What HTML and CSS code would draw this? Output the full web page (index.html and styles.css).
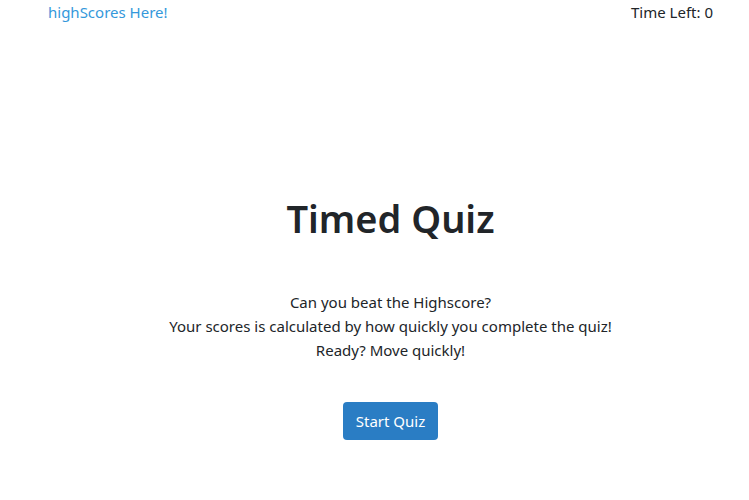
FILE: index.html
```html
<!DOCTYPE html>
<html>
<head>
<meta charset="utf-8">
<link rel="stylesheet" href="styles.css">
</head>
<body>
<header class="topbar">
  <a class="hs-link" href="#">highScores Here!</a>
  <span class="timer">Time Left: 0</span>
</header>
<main class="intro">
  <h1 class="title">Timed Quiz</h1>
  <p class="lead">Can you beat the Highscore?<br>Your scores is calculated by how quickly you complete the quiz!<br>Ready? Move quickly!</p>
  <button class="start-btn">Start Quiz</button>
</main>
</body>
</html>
```
FILE: styles.css
```css
html, body {
  margin: 0;
  padding: 0;
  background: #fff;
}
body {
  font-family: "Noto Sans", "Open Sans", sans-serif;
  font-size: 15px;
  color: #212529;
  line-height: 24px;
}
.topbar {
  display: flex;
  justify-content: space-between;
  padding: 0 36px 0 48px;
  height: 24px;
}
.hs-link {
  color: #3498db;
  text-decoration: none;
}
.timer {
  color: #212529;
}
.intro {
  display: flex;
  flex-direction: column;
  align-items: center;
  padding-left: 32px;
  padding-top: 168px;
}
.title {
  margin: 0;
  font-size: 38px;
  font-weight: 600;
  line-height: 52px;
}
.lead {
  margin: 46px 0 0;
  text-align: center;
}
.start-btn {
  margin-top: 40px;
  font-family: inherit;
  font-size: 15px;
  color: #fff;
  background: #2a7dc4;
  border: none;
  border-radius: 4px;
  padding: 7px 13px;
  line-height: 24px;
}
```
